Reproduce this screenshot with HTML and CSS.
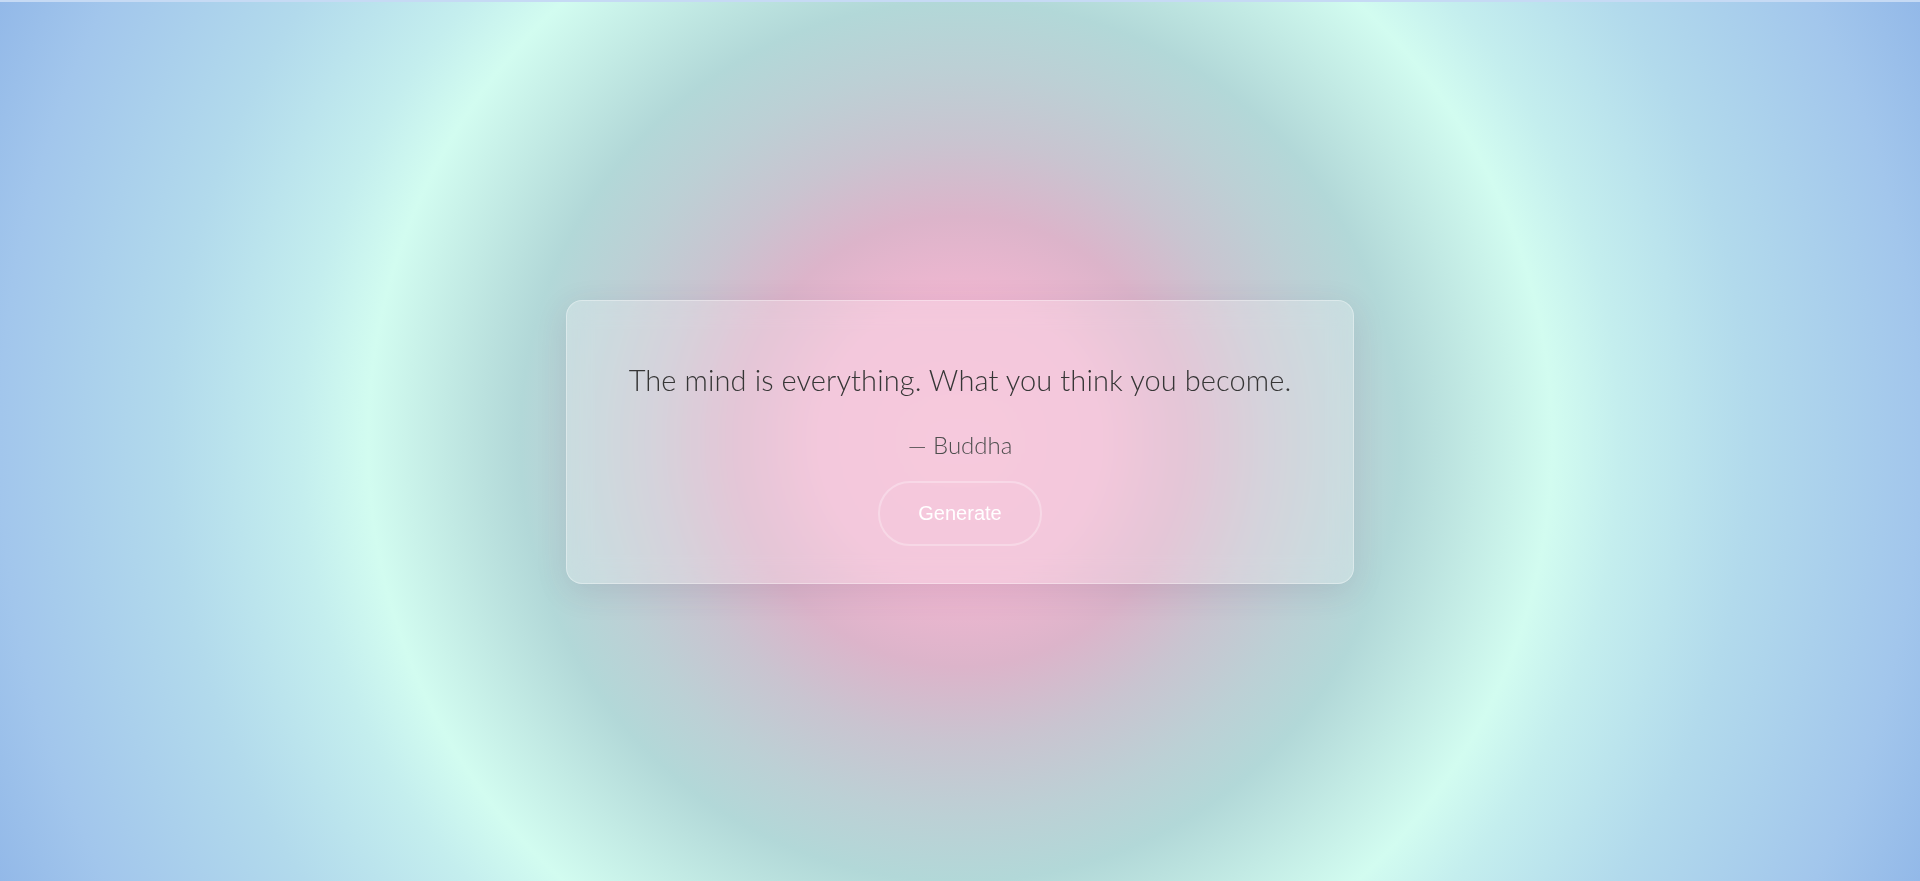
FILE: index.html
```html
<!DOCTYPE html>
<html lang="en">
<head>
<meta charset="utf-8">
<title>Quote Generator</title>
<link rel="stylesheet" href="styles.css">
</head>
<body>
<div class="topline"></div>
<main class="stage">
  <section class="card">
    <p class="quote">The mind is everything. What you think you become.</p>
    <p class="author">— Buddha</p>
    <button class="btn" type="button">Generate</button>
  </section>
</main>
</body>
</html>
```
FILE: styles.css
```css
html, body {
  margin: 0;
  padding: 0;
  height: 100%;
}
body {
  font-family: "Lato", "Liberation Sans", sans-serif;
  background: #c6daf4;
  overflow: hidden;
}
.topline {
  height: 2px;
  background: #c6daf4;
}
.stage {
  height: 879px;
  display: flex;
  align-items: center;
  justify-content: center;
  background: radial-gradient(circle at 50% 50%,
    #f4b8d3 0px,
    #f0b7d1 140px,
    #dcb4ca 225px,
    #c9c4d0 300px,
    #bcd0d5 375px,
    #b2d8d8 440px,
    #c2eae4 515px,
    #d2fcf0 592px,
    #c4eeee 660px,
    #b2daec 790px,
    #a2c6ec 960px,
    #92b8e8 1060px);
}
.card {
  box-sizing: border-box;
  width: 788px;
  height: 284px;
  padding: 40px 40px 38px;
  border-radius: 16px;
  border: 1px solid rgba(255, 255, 255, 0.35);
  background: rgba(255, 255, 255, 0.24);
  backdrop-filter: blur(12px);
  box-shadow: 0 8px 32px rgba(60, 60, 90, 0.12);
  display: flex;
  flex-direction: column;
  align-items: center;
  text-align: center;
}
.quote {
  margin: 20px 0 0;
  font-size: 29px;
  font-weight: 300;
  line-height: 38px;
  color: #363636;
  letter-spacing: 0.1px;
}
.author {
  margin: 32px 0 0;
  font-size: 24px;
  font-weight: 300;
  line-height: 28px;
  color: #4e4e4e;
}
.btn {
  margin-top: 22px;
  padding: 19px 38px;
  font-family: "Liberation Sans", Arial, sans-serif;
  font-size: 20px;
  line-height: 23px;
  color: #ffffff;
  background: transparent;
  border: 2px solid rgba(255, 255, 255, 0.3);
  border-radius: 32px;
  cursor: pointer;
}
```
